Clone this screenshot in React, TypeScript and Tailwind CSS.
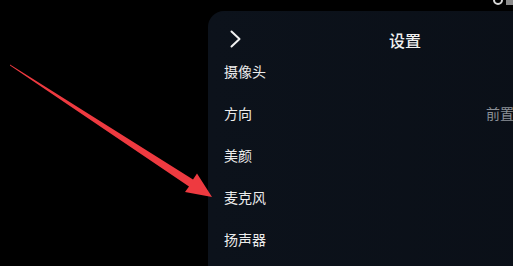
import {FC} from "react";

const rows = [
    {label: "摄像头", value: ""},
    {label: "方向", value: "前置"},
    {label: "美颜", value: ""},
    {label: "麦克风", value: ""},
    {label: "扬声器", value: ""},
];

const App: FC = () => {
    return (
        <div
            className="relative w-[513px] h-[266px] overflow-hidden bg-black"
            style={{fontFamily: '"Noto Sans CJK SC", "Noto Sans", sans-serif'}}
        >
            {/* status bar bits, cut off at the top */}
            <div className="absolute top-[-5px] left-[493px] w-[10px] h-[10px] rounded-full border-2 border-[#d8d8d8]" />
            <div className="absolute top-0 left-[506px] w-[8px] h-[5px] bg-[#8a8a8a]" />

            {/* settings panel */}
            <div className="ml-[208px] mt-[11px] w-[394px] h-[300px] rounded-t-2xl bg-gradient-to-r from-[#0c121b] to-[#0a0f17]">
                <div className="relative h-[39px] flex items-start justify-center pt-[19px]">
                    <svg className="absolute left-[22px] top-[19px]" width="12" height="18" viewBox="0 0 12 18" fill="none">
                        <path d="M1.5 1.5 L9.5 9 L1.5 16.5" stroke="#f2f2f2" strokeWidth="2" strokeLinecap="round" strokeLinejoin="round" />
                    </svg>
                    <span className="text-[16px] leading-[20px] font-medium text-[#f0f0f0]">设置</span>
                </div>
                {rows.map((row, i) => (
                    <div key={i} className="h-[42px] flex items-center justify-between pl-[16px] pr-[88px]">
                        <span className="text-[14px] text-[#ececec]">{row.label}</span>
                        {row.value && <span className="text-[14px] text-[#8b9097]">{row.value}</span>}
                    </div>
                ))}
            </div>

            {/* red annotation arrow */}
            <svg className="absolute left-0 top-0" width="513" height="266" viewBox="0 0 513 266">
                <polygon
                    points="10,64.5 193,179.5 197,173.5 212,197 185,192 189,186.5 10,65.5"
                    fill="#ee3a40"
                />
            </svg>
        </div>
    );
};

export default App;
